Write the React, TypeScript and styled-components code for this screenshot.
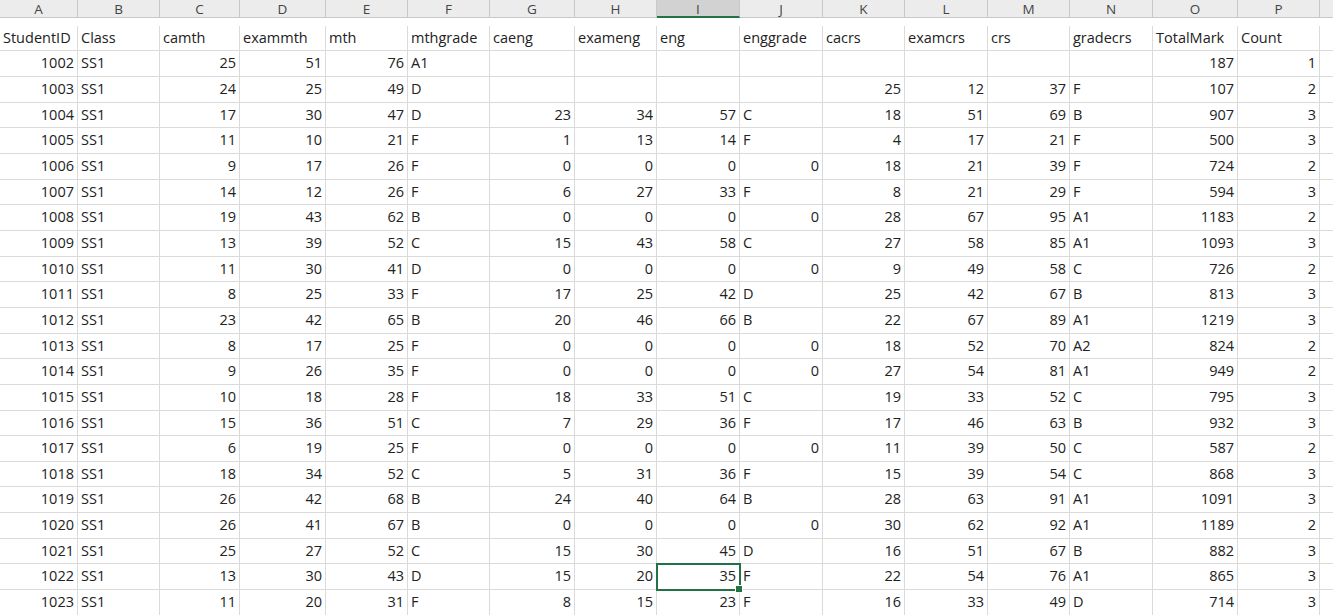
import React from "react";
import styled, { createGlobalStyle } from "styled-components";

const Global = createGlobalStyle`
  html, body { margin: 0; padding: 0; background: #fff; overflow: hidden; }
  body { font-family: "Open Sans", "Liberation Sans", sans-serif; }
`;

const widths = [78, 82, 80, 86, 82, 82, 85, 82, 83, 83, 82, 83, 82, 83, 85, 82, 40];
const letters = ["A","B","C","D","E","F","G","H","I","J","K","L","M","N","O","P",""];
const cols = widths.map((w) => `${w}px`).join(" ");

const Sheet = styled.div`
  display: grid;
  grid-template-columns: ${cols};
  grid-auto-rows: 25.67px;
  width: 1333px;
  overflow: hidden;
  font-size: 14.5px;
  color: #222;
`;

const ColHead = styled.div<{ $sel?: boolean }>`
  height: 18px;
  line-height: 18px;
  text-align: center;
  font-size: 13.5px;
  color: #444;
  background: ${(p) => (p.$sel ? "#d2d2d2" : "#ececec")};
  border-right: 1px solid #c8c8c8;
  border-bottom: ${(p) => (p.$sel ? "2px solid #217346" : "1px solid #c8c8c8")};
  box-sizing: border-box;
`;

const Cell = styled.div<{ $num?: boolean; $sel?: boolean }>`
  position: relative;
  box-sizing: border-box;
  border-right: 1px solid #dadada;
  border-bottom: 1px solid #dadada;
  padding: 0 3px;
  line-height: 24px;
  white-space: nowrap;
  overflow: visible;
  text-align: ${(p) => (p.$num ? "right" : "left")};
  ${(p) => p.$sel && "outline: 2px solid #217346; outline-offset: -1px; z-index: 1;"}
`;

const Handle = styled.span`
  position: absolute;
  right: -4px;
  bottom: -4px;
  width: 6px;
  height: 6px;
  background: #217346;
  border: 1px solid #fff;
`;

const header = ["StudentID","Class","camth","exammth","mth","mthgrade","caeng","exameng","eng","enggrade","cacrs","examcrs","crs","gradecrs","TotalMark","Count",""];

const raw = `1002 SS1 25 51 76 A1 - - - - - - - - 187 1
1003 SS1 24 25 49 D - - - - 25 12 37 F 107 2
1004 SS1 17 30 47 D 23 34 57 C 18 51 69 B 907 3
1005 SS1 11 10 21 F 1 13 14 F 4 17 21 F 500 3
1006 SS1 9 17 26 F 0 0 0 0 18 21 39 F 724 2
1007 SS1 14 12 26 F 6 27 33 F 8 21 29 F 594 3
1008 SS1 19 43 62 B 0 0 0 0 28 67 95 A1 1183 2
1009 SS1 13 39 52 C 15 43 58 C 27 58 85 A1 1093 3
1010 SS1 11 30 41 D 0 0 0 0 9 49 58 C 726 2
1011 SS1 8 25 33 F 17 25 42 D 25 42 67 B 813 3
1012 SS1 23 42 65 B 20 46 66 B 22 67 89 A1 1219 3
1013 SS1 8 17 25 F 0 0 0 0 18 52 70 A2 824 2
1014 SS1 9 26 35 F 0 0 0 0 27 54 81 A1 949 2
1015 SS1 10 18 28 F 18 33 51 C 19 33 52 C 795 3
1016 SS1 15 36 51 C 7 29 36 F 17 46 63 B 932 3
1017 SS1 6 19 25 F 0 0 0 0 11 39 50 C 587 2
1018 SS1 18 34 52 C 5 31 36 F 15 39 54 C 868 3
1019 SS1 26 42 68 B 24 40 64 B 28 63 91 A1 1091 3
1020 SS1 26 41 67 B 0 0 0 0 30 62 92 A1 1189 2
1021 SS1 25 27 52 C 15 30 45 D 16 51 67 B 882 3
1022 SS1 13 30 43 D 15 20 35 F 22 54 76 A1 865 3
1023 SS1 11 20 31 F 8 15 23 F 16 33 49 D 714 3`;

const rows = raw.split("\n").map((l) => l.split(" ").map((v) => (v === "-" ? "" : v)));

const isNum = (v: string) => /^\d+$/.test(v);

export default function App() {
  return (
    <>
      <Global />
      <Sheet>
        {letters.map((l, i) => (
          <ColHead key={"h" + i} $sel={l === "I"}>{l}</ColHead>
        ))}
        {header.map((h, i) => (
          <Cell key={"t" + i}>{h}</Cell>
        ))}
        {rows.map((r, ri) =>
          [...r, ""].map((v, ci) => {
            const sel = ri === 20 && ci === 8;
            return (
              <Cell key={ri + "-" + ci} $num={isNum(v)} $sel={sel}>
                {v}
                {sel && <Handle />}
              </Cell>
            );
          })
        )}
      </Sheet>
    </>
  );
}
